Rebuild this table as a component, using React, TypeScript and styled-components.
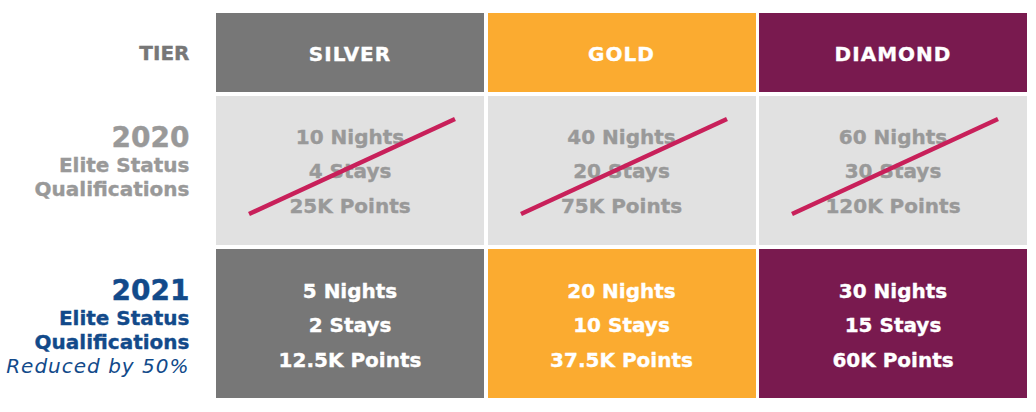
import React from "react";
import styled, { createGlobalStyle } from "styled-components";

const Global = createGlobalStyle`
  html, body { margin: 0; padding: 0; background: #ffffff; }
  body { font-family: "DejaVu Sans", "Liberation Sans", sans-serif; }
`;

const Table = styled.div`
  display: grid;
  grid-template-columns: 212.5px 268px 268px 268px;
  grid-template-rows: 79px 149px 149px;
  column-gap: 3.5px;
  row-gap: 4px;
  padding-top: 13px;
  width: 1036px;
  box-sizing: border-box;
`;

const Label = styled.div<{ $pt?: number; $pb?: number }>`
  display: flex;
  flex-direction: column;
  justify-content: center;
  align-items: flex-end;
  text-align: right;
  padding-right: 23px;
  padding-top: ${(p) => p.$pt ?? 0}px;
  padding-bottom: ${(p) => p.$pb ?? 0}px;
  box-sizing: border-box;
`;

const TierLabel = styled.div`
  font-weight: 700;
  font-size: 20px;
  color: #777777;
  -webkit-text-stroke: 0.35px #777777;
`;

const Year = styled.div<{ $c: string }>`
  font-weight: 700;
  font-size: 28px;
  line-height: 30px;
  color: ${(p) => p.$c};
  -webkit-text-stroke: 0.4px ${(p) => p.$c};
`;

const Sub = styled.div<{ $c: string }>`
  font-weight: 700;
  font-size: 20px;
  line-height: 24px;
  color: ${(p) => p.$c};
  -webkit-text-stroke: 0.35px ${(p) => p.$c};
`;

const Note = styled.div`
  font-style: italic;
  font-weight: 400;
  font-size: 20px;
  line-height: 25px;
  letter-spacing: 1px;
  color: #124a8a;
`;

const Header = styled.div<{ $bg: string }>`
  background: ${(p) => p.$bg};
  display: flex;
  align-items: center;
  justify-content: center;
  color: #ffffff;
  font-weight: 700;
  font-size: 20px;
  letter-spacing: 1px;
  padding-top: 3px;
  box-sizing: border-box;
  -webkit-text-stroke: 0.35px #ffffff;
`;

const Cell = styled.div<{ $bg: string; $fg: string; $pt?: number }>`
  position: relative;
  background: ${(p) => p.$bg};
  color: ${(p) => p.$fg};
  display: flex;
  flex-direction: column;
  align-items: center;
  justify-content: center;
  font-weight: 700;
  font-size: 20px;
  padding-top: ${(p) => p.$pt ?? 0}px;
  box-sizing: border-box;
  overflow: hidden;
  -webkit-text-stroke: 0.35px ${(p) => p.$fg};
`;

const Line = styled.div`
  line-height: 34.5px;
  white-space: nowrap;
`;

const Strike = styled.svg`
  position: absolute;
  left: 0;
  top: 0;
  width: 100%;
  height: 100%;
  pointer-events: none;
`;

const SILVER = "#777777";
const GOLD = "#fbab30";
const DIAMOND = "#791a4f";
const GREYBG = "#e1e1e1";
const GREYTX = "#999999";
const BLUE = "#124a8a";

const tiers = [
  { name: "SILVER", bg: SILVER, old: ["10 Nights", "4 Stays", "25K Points"], now: ["5 Nights", "2 Stays", "12.5K Points"] },
  { name: "GOLD", bg: GOLD, old: ["40 Nights", "20 Stays", "75K Points"], now: ["20 Nights", "10 Stays", "37.5K Points"] },
  { name: "DIAMOND", bg: DIAMOND, old: ["60 Nights", "30 Stays", "120K Points"], now: ["30 Nights", "15 Stays", "60K Points"] },
];

export default function App() {
  return (
    <>
      <Global />
      <Table>
        <Label>
          <TierLabel>TIER</TierLabel>
        </Label>
        {tiers.map((t) => (
          <Header key={t.name} $bg={t.bg}>{t.name}</Header>
        ))}

        <Label $pb={18}>
          <Year $c={GREYTX}>2020</Year>
          <Sub $c={GREYTX}>Elite Status</Sub>
          <Sub $c={GREYTX}>Qualifications</Sub>
        </Label>
        {tiers.map((t) => (
          <Cell key={t.name} $bg={GREYBG} $fg={GREYTX} $pt={2}>
            {t.old.map((l) => (
              <Line key={l}>{l}</Line>
            ))}
            <Strike viewBox="0 0 268 149">
              <line x1="33" y1="118" x2="239" y2="23" stroke="#c8205a" strokeWidth="4.5" />
            </Strike>
          </Cell>
        ))}

        <Label $pt={8}>
          <Year $c={BLUE}>2021</Year>
          <Sub $c={BLUE}>Elite Status</Sub>
          <Sub $c={BLUE}>Qualifications</Sub>
          <Note>Reduced by 50%</Note>
        </Label>
        {tiers.map((t) => (
          <Cell key={t.name} $bg={t.bg} $fg="#ffffff" $pt={4}>
            {t.now.map((l) => (
              <Line key={l}>{l}</Line>
            ))}
          </Cell>
        ))}
      </Table>
    </>
  );
}
